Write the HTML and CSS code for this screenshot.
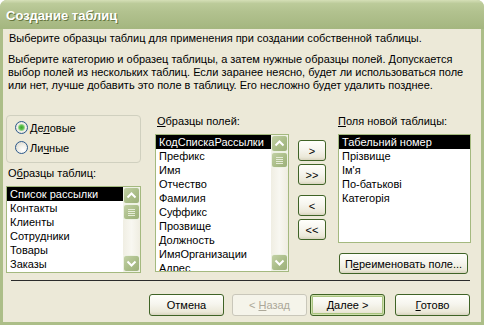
FILE: index.html
```html
<!DOCTYPE html>
<html lang="ru">
<head>
    <meta charset="UTF-8">
    <title>Создание таблиц</title>
    <link rel="stylesheet" href="styles.css">
</head>
<body>
    <div class="window">
        <div class="titlebar">Создание таблиц</div>
        <div class="client">
            <p class="intro">Выберите образцы таблиц для применения при создании собственной таблицы.</p>
            <p class="help">Выберите категорию и образец таблицы, а затем нужные образцы полей. Допускается<br>выбор полей из нескольких таблиц. Если заранее неясно, будет ли использоваться поле<br>или нет, лучше добавить это поле в таблицу. Его несложно будет удалить позднее.</p>

            <div class="picker">
                <div class="col col-tables">
                    <div class="groupbox">
                        <label class="radio"><span class="radio-dot checked"></span><span>Де<u>л</u>овые</span></label>
                        <label class="radio"><span class="radio-dot"></span><span>Ли<u>ч</u>ные</span></label>
                    </div>
                    <div class="caption">О<u>б</u>разцы таблиц:</div>
                    <div class="listbox list-tables">
                        <ul class="items">
                            <li class="selected">Список рассылки</li>
                            <li>Контакты</li>
                            <li>Клиенты</li>
                            <li>Сотрудники</li>
                            <li>Товары</li>
                            <li>Заказы</li>
                        </ul>
                        <div class="scrollbar">
                            <div class="sb-btn"><svg width="15" height="15" viewBox="0 0 15 15"><path d="M3.5 9.5 L7.5 5.5 L11.5 9.5" fill="none" stroke="#fff" stroke-width="2"/></svg></div>
                            <div class="sb-thumb"><span></span><span></span><span></span><span></span></div>
                            <div class="sb-track"></div>
                            <div class="sb-btn"><svg width="15" height="15" viewBox="0 0 15 15"><path d="M3.5 5.5 L7.5 9.5 L11.5 5.5" fill="none" stroke="#fff" stroke-width="2"/></svg></div>
                        </div>
                    </div>
                </div>

                <div class="col col-fields">
                    <div class="caption"><u>О</u>бразцы полей:</div>
                    <div class="listbox list-fields">
                        <ul class="items">
                            <li class="selected">КодСпискаРассылки</li>
                            <li>Префикс</li>
                            <li>Имя</li>
                            <li>Отчество</li>
                            <li>Фамилия</li>
                            <li>Суффикс</li>
                            <li>Прозвище</li>
                            <li>Должность</li>
                            <li>ИмяОрганизации</li>
                            <li>Адрес</li>
                        </ul>
                        <div class="scrollbar">
                            <div class="sb-btn"><svg width="15" height="15" viewBox="0 0 15 15"><path d="M3.5 9.5 L7.5 5.5 L11.5 9.5" fill="none" stroke="#fff" stroke-width="2"/></svg></div>
                            <div class="sb-thumb"><span></span><span></span><span></span><span></span></div>
                            <div class="sb-track"></div>
                            <div class="sb-btn"><svg width="15" height="15" viewBox="0 0 15 15"><path d="M3.5 5.5 L7.5 9.5 L11.5 5.5" fill="none" stroke="#fff" stroke-width="2"/></svg></div>
                        </div>
                    </div>
                </div>

                <div class="col col-arrows">
                    <button class="btn btn-arrow">&gt;</button>
                    <button class="btn btn-arrow">&gt;&gt;</button>
                    <button class="btn btn-arrow gap">&lt;</button>
                    <button class="btn btn-arrow">&lt;&lt;</button>
                </div>

                <div class="col col-new">
                    <div class="caption"><u>П</u>оля новой таблицы:</div>
                    <div class="listbox list-new">
                        <ul class="items">
                            <li class="selected">Табельний номер</li>
                            <li>Прізвище</li>
                            <li>Ім'я</li>
                            <li>По-батькові</li>
                            <li>Категорія</li>
                        </ul>
                    </div>
                    <button class="btn btn-rename">П<u>е</u>реименовать поле...</button>
                </div>
            </div>

            <div class="separator"></div>

            <div class="actions">
                <button class="btn btn-cancel">Отмена</button>
                <button class="btn btn-back" disabled>&lt; <u>Н</u>азад</button>
                <button class="btn btn-next default"><u>Д</u>алее &gt;</button>
                <button class="btn btn-finish"><u>Г</u>отово</button>
            </div>
        </div>
    </div>
</body>
</html>
```

FILE: styles.css
```css
* {
    margin: 0;
    padding: 0;
    box-sizing: border-box;
}

body {
    font-family: "Liberation Sans", Arial, sans-serif;
    font-size: 11px;
    color: #000;
    background: #fff;
    width: 484px;
    height: 325px;
    overflow: hidden;
}

.window {
    width: 484px;
    height: 325px;
    display: flex;
    flex-direction: column;
    background: #acbe88;
    border-radius: 7px 7px 0 0;
}

.titlebar {
    height: 29px;
    padding: 2px 0 0 6px;
    line-height: 27px;
    color: #fff;
    font-size: 13px;
    font-weight: bold;
    text-shadow: 1px 1px 0 #66763f;
    border-radius: 7px 7px 0 0;
    background: linear-gradient(to bottom, #d5dfb7 0%, #bccb9a 12%, #b2c28f 40%, #aabb86 75%, #a4b67f 100%);
}

.client {
    flex: 1;
    margin: 0 3px 3px;
    padding-top: 3px;
    background: #ece9d8;
    display: flex;
    flex-direction: column;
}

.intro,
.help {
    line-height: 13px;
    white-space: nowrap;
    padding-left: 6px;
}

.help {
    margin-top: 8px;
    padding-left: 5px;
}

/* main picker area */
.picker {
    display: flex;
    align-items: flex-start;
    margin-top: 23px;
    padding-left: 3px;
}

.col {
    display: flex;
    flex-direction: column;
}

.col-tables {
    width: 135px;
    margin-right: 14px;
}

.col-fields {
    width: 134px;
    margin-right: 9px;
}

.col-arrows {
    width: 28px;
    margin-top: 25px;
    margin-right: 12px;
}

.col-new {
    width: 133px;
}

.caption {
    height: 13px;
    line-height: 13px;
    white-space: nowrap;
}

.col-fields .caption {
    padding-left: 2px;
}

.col-tables .caption {
    margin-top: 4px;
    padding-left: 2px;
}

.groupbox {
    height: 48px;
    border: 1px solid #d0d0bf;
    border-radius: 4px;
    padding: 5px 0 0 8px;
    display: flex;
    flex-direction: column;
    gap: 7px;
}

.radio {
    display: flex;
    align-items: center;
    height: 13px;
    gap: 2px;
}

.radio-dot {
    width: 13px;
    height: 13px;
    border-radius: 50%;
    border: 1px solid #2c5a8c;
    background: radial-gradient(circle at 65% 70%, #ffffff 0%, #f2f1ea 40%, #d6d3c6 100%);
}

.radio-dot.checked {
    background: radial-gradient(circle at 50% 50%, #3ea52d 0, #5cc04c 2px, #9ad68e 3px, #f2f1ea 4px, #d6d3c6 100%);
}

/* list boxes */
.listbox {
    margin-top: 6px;
    border: 1px solid #a4b97f;
    background: #fff;
    display: flex;
    overflow: hidden;
}

.list-tables {
    height: 87px;
}

.list-fields {
    height: 138px;
}

.list-new {
    height: 109px;
}

.items {
    list-style: none;
    flex: 1;
    overflow: hidden;
}

.items li {
    height: 14px;
    line-height: 14px;
    padding-left: 3px;
    white-space: nowrap;
}

.items li.selected {
    background: #000;
    color: #fff;
}

.scrollbar {
    width: 17px;
    display: flex;
    flex-direction: column;
    background: #f4f3eb;
}

.sb-btn,
.sb-thumb {
    width: 17px;
    height: 17px;
    border: 1px solid #eef2e4;
    border-radius: 3px;
    background: linear-gradient(135deg, #c3d1a6 0%, #aabd88 55%, #9db07a 100%);
    display: flex;
    align-items: center;
    justify-content: center;
}

.sb-thumb {
    height: 16px;
    flex-direction: column;
    gap: 1px;
}

.sb-thumb span {
    display: block;
    width: 7px;
    height: 1px;
    background: #e6ecd8;
}

.sb-track {
    flex: 1;
    background: linear-gradient(to right, #f0eee3, #f8f7f1 50%, #efede1);
}

/* buttons */
.btn {
    font-family: "Liberation Sans", Arial, sans-serif;
    font-size: 11px;
    color: #000;
    height: 22px;
    border: 1px solid #3f6326;
    border-radius: 3px;
    background: linear-gradient(to bottom, #fffffb 0%, #f6f5ee 45%, #ebe8d8 85%, #d8d4bf 100%);
    white-space: nowrap;
}

.btn-arrow {
    width: 28px;
    height: 21px;
    margin-bottom: 3px;
}

.btn-arrow.gap {
    margin-top: 7px;
}

.btn-rename {
    width: 129px;
    height: 21px;
    margin: 10px 0 0 1px;
}

.separator {
    height: 1px;
    margin: 6px 11px 0 8px;
    background: #2b2b2b;
}

.actions {
    display: flex;
    justify-content: flex-end;
    margin-top: 13px;
    padding-right: 11px;
}

.actions .btn {
    width: 75px;
}

.btn-back {
    margin-left: 8px;
    color: #aca899;
    border-color: #c9c7ba;
    background: #f5f4ea;
}

.btn-next {
    margin-left: 3px;
}

.btn-finish {
    margin-left: 10px;
}

.btn.default {
    box-shadow: inset 0 0 0 1px #cfe0ae, inset 0 0 0 2px #a9c47f;
}
```
